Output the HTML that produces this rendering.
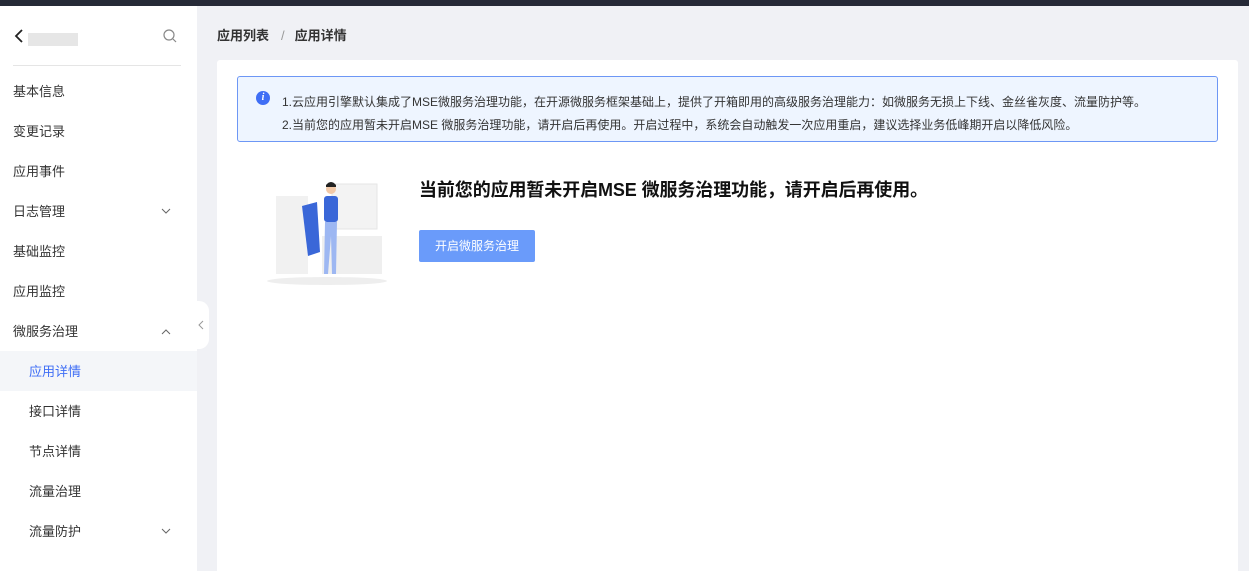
<!DOCTYPE html>
<html><head><meta charset="utf-8"><style>
*{margin:0;padding:0;box-sizing:border-box}
html,body{width:1249px;height:571px;overflow:hidden}
body{background:#f0f1f5;font-family:"Liberation Sans","Noto Sans CJK SC",sans-serif;position:relative;color:#333}
.top{position:absolute;left:0;top:0;width:1249px;height:6px;background:#262a37}
.side{position:absolute;left:0;top:6px;width:197px;height:565px;background:#fff}
.item{position:absolute;left:0;width:197px;height:40px;line-height:40px;font-size:13px;color:#333;padding-left:13px}
.sub{padding-left:29px}
.act{background:#f4f6f9;color:#3f6ef5}
.chev{position:absolute;right:26px;top:0;font-size:10px;color:#666}
.card{position:absolute;left:217px;top:60px;width:1021px;height:520px;background:#fff;border-radius:3px}
.alert{position:absolute;left:237px;top:76px;width:981px;height:66px;background:#eef5ff;border:1px solid #6d97f5;border-radius:3px;font-size:12px;color:#333}
</style></head><body>
<div class="top"></div>
<div class="side">
  <svg style="position:absolute;left:14px;top:23px" width="10" height="14"><path d="M8 1 L2 7 L8 13" stroke="#222" stroke-width="1.8" fill="none"/></svg>
  <div style="position:absolute;left:28px;top:27px;width:50px;height:13px;background:#e6e6e6"></div>
  <svg style="position:absolute;left:163px;top:23px" width="14" height="14"><circle cx="6" cy="6" r="5" stroke="#888" stroke-width="1.2" fill="none"/><path d="M10 10 L13 13" stroke="#888" stroke-width="1.2"/></svg>
  <div style="position:absolute;left:13px;top:59px;width:168px;height:1px;background:#e5e5e5"></div>
  <div class="item" style="top:66px">基本信息</div>
  <div class="item" style="top:106px">变更记录</div>
  <div class="item" style="top:146px">应用事件</div>
  <div class="item" style="top:186px">日志管理<svg class="chev" style="top:16px" width="10" height="7"><path d="M1 1 L5 5 L9 1" stroke="#666" fill="none"/></svg></div>
  <div class="item" style="top:226px">基础监控</div>
  <div class="item" style="top:266px">应用监控</div>
  <div class="item" style="top:306px">微服务治理<svg class="chev" style="top:16px" width="10" height="7"><path d="M1 6 L5 2 L9 6" stroke="#666" fill="none"/></svg></div>
  <div class="item sub act" style="top:345px;line-height:42px">应用详情</div>
  <div class="item sub" style="top:386px">接口详情</div>
  <div class="item sub" style="top:426px">节点详情</div>
  <div class="item sub" style="top:466px">流量治理</div>
  <div class="item sub" style="top:506px">流量防护<svg class="chev" style="top:16px" width="10" height="7"><path d="M1 1 L5 5 L9 1" stroke="#666" fill="none"/></svg></div>
</div>
<div style="position:absolute;left:193px;top:301px;width:16px;height:48px;background:#fff;border-radius:0 10px 10px 0"><svg style="position:absolute;left:5px;top:19px" width="6" height="10"><path d="M5 1 L1 5 L5 9" stroke="#999" fill="none"/></svg></div>
<div style="position:absolute;left:217px;top:25px;font-size:13px;font-weight:bold;color:#333">应用列表<span style="color:#999;font-weight:normal;margin:0 10px 0 12px">/</span>应用详情</div>
<div class="card"></div>
<div class="alert">
  <div style="position:absolute;left:18px;top:14px;width:14px;height:14px;border-radius:50%;background:#3f6ef5;color:#fff;font-size:10px;font-style:italic;font-weight:bold;text-align:center;line-height:14px;font-family:'Liberation Serif',serif">i</div>
  <div style="position:absolute;left:44px;top:14px;line-height:23px;white-space:nowrap">1.云应用引擎默认集成了MSE微服务治理功能，在开源微服务框架基础上，提供了开箱即用的高级服务治理能力：如微服务无损上下线、金丝雀灰度、流量防护等。<br>2.当前您的应用暂未开启MSE 微服务治理功能，请开启后再使用。开启过程中，系统会自动触发一次应用重启，建议选择业务低峰期开启以降低风险。</div>
</div>
<svg style="position:absolute;left:262px;top:176px" width="130" height="110">
  <ellipse cx="65" cy="105" rx="60" ry="4" fill="#eee"/>
  <rect x="14" y="20" width="32" height="78" fill="#f1f1f1"/>
  <rect x="70" y="8" width="45" height="45" fill="#f3f3f3" stroke="#e6e6e6"/>
  <rect x="60" y="60" width="60" height="38" fill="#efefef"/>
  <path d="M40 30 L55 26 L58 76 L46 80 Z" fill="#3a67d8"/>
  <rect x="62" y="20" width="14" height="26" fill="#3a67d8" rx="3"/>
  <circle cx="69" cy="13" r="5" fill="#f2c9a8"/>
  <path d="M64 9 Q69 3 74 9 L74 11 L64 11Z" fill="#222"/>
  <path d="M63 46 L75 46 L74 98 L70 98 L69 60 L66 98 L62 98Z" fill="#9db7f2"/>
</svg>
<div style="position:absolute;left:419px;top:176px;font-size:18px;font-weight:bold;color:#111;letter-spacing:-0.1px">当前您的应用暂未开启MSE 微服务治理功能，请开启后再使用。</div>
<div style="position:absolute;left:419px;top:230px;width:116px;height:32px;background:#6a9bfa;border-radius:2px;color:#fff;font-size:12px;text-align:center;line-height:32px">开启微服务治理</div>
</body></html>
